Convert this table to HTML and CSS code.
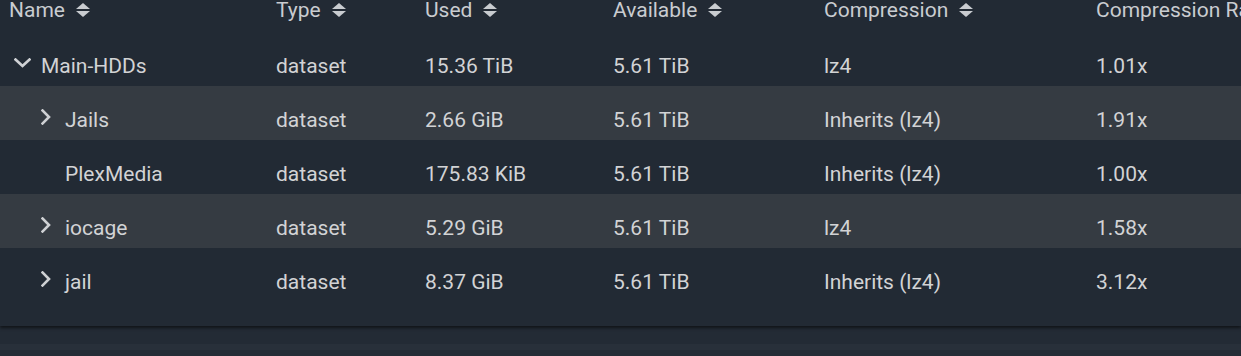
FILE: index.html
```html
<!DOCTYPE html>
<html>
<head>
<meta charset="utf-8">
<link rel="stylesheet" href="styles.css">
</head>
<body>
<div class="page">
  <div class="card">
    <div class="grid head">
      <div class="hc name-h">Name <svg class="sort" viewBox="0 0 14 14"><polygon points="0,6 7,0 14,6"/><polygon points="0,8 7,14 14,8"/></svg></div>
      <div class="hc">Type <svg class="sort" viewBox="0 0 14 14"><polygon points="0,6 7,0 14,6"/><polygon points="0,8 7,14 14,8"/></svg></div>
      <div class="hc">Used <svg class="sort" viewBox="0 0 14 14"><polygon points="0,6 7,0 14,6"/><polygon points="0,8 7,14 14,8"/></svg></div>
      <div class="hc">Available <svg class="sort" viewBox="0 0 14 14"><polygon points="0,6 7,0 14,6"/><polygon points="0,8 7,14 14,8"/></svg></div>
      <div class="hc">Compression <svg class="sort" viewBox="0 0 14 14"><polygon points="0,6 7,0 14,6"/><polygon points="0,8 7,14 14,8"/></svg></div>
      <div class="hc">Compression Ratio</div>
    </div>

    <div class="grid row">
      <div class="c name lvl0"><span class="tog"><svg class="chev-down" viewBox="0 0 17 10"><polyline points="1.5,1.5 8.5,8 15.5,1.5"/></svg></span>Main-HDDs</div>
      <div class="c">dataset</div>
      <div class="c">15.36 TiB</div>
      <div class="c">5.61 TiB</div>
      <div class="c">lz4</div>
      <div class="c">1.01x</div>
    </div>
    <div class="grid row alt">
      <div class="c name lvl1"><span class="tog"><svg class="chev-right" viewBox="0 0 10 16"><polyline points="1.5,1.5 8,8 1.5,14.5"/></svg></span>Jails</div>
      <div class="c">dataset</div>
      <div class="c">2.66 GiB</div>
      <div class="c">5.61 TiB</div>
      <div class="c">Inherits (lz4)</div>
      <div class="c">1.91x</div>
    </div>
    <div class="grid row">
      <div class="c name lvl1"><span class="tog"></span>PlexMedia</div>
      <div class="c">dataset</div>
      <div class="c">175.83 KiB</div>
      <div class="c">5.61 TiB</div>
      <div class="c">Inherits (lz4)</div>
      <div class="c">1.00x</div>
    </div>
    <div class="grid row alt">
      <div class="c name lvl1"><span class="tog"><svg class="chev-right" viewBox="0 0 10 16"><polyline points="1.5,1.5 8,8 1.5,14.5"/></svg></span>iocage</div>
      <div class="c">dataset</div>
      <div class="c">5.29 GiB</div>
      <div class="c">5.61 TiB</div>
      <div class="c">lz4</div>
      <div class="c">1.58x</div>
    </div>
    <div class="grid row">
      <div class="c name lvl1"><span class="tog"><svg class="chev-right" viewBox="0 0 10 16"><polyline points="1.5,1.5 8,8 1.5,14.5"/></svg></span>jail</div>
      <div class="c">dataset</div>
      <div class="c">8.37 GiB</div>
      <div class="c">5.61 TiB</div>
      <div class="c">Inherits (lz4)</div>
      <div class="c">3.12x</div>
    </div>
  </div>
  <div class="footer-strip"></div>
</div>
</body>
</html>
```

FILE: styles.css
```css
html, body {
  margin: 0;
  padding: 0;
  background: #232b35;
  overflow: hidden;
}

.page {
  width: 1241px;
  height: 356px;
  overflow: hidden;
  font-family: Roboto, "Liberation Sans", sans-serif;
  font-size: 21px;
  color: #d2d3d5;
}

.card {
  background: #222a34;
  padding-bottom: 24px;
  box-shadow: 0 2px 3px rgba(0, 0, 0, 0.55);
  position: relative;
  z-index: 1;
}

.grid {
  display: grid;
  grid-template-columns: 276px 149px 188px 211px 272px 400px;
  white-space: nowrap;
}

.head .hc {
  height: 21px;
  line-height: 21px;
  padding-bottom: 11px;
  color: #c9ccd0;
  display: flex;
  align-items: center;
}

.head .name-h {
  padding-left: 9px;
}

.sort {
  width: 14px;
  height: 14px;
  margin-left: 11px;
  margin-top: -1px;
  fill: #c9ccd0;
}

.row {
  height: 54px;
}

.row.alt {
  background: #353b42;
}

.c {
  padding-top: 14px;
  line-height: 40px;
  height: 40px;
}

.name {
  display: flex;
}

.lvl0 {
  padding-left: 10px;
}

.lvl1 {
  padding-left: 34px;
}

.tog {
  width: 24px;
  height: 36px;
  padding-bottom: 4px;
  margin-top: -1px;
  margin-right: 7px;
  display: flex;
  align-items: center;
  justify-content: center;
  flex: none;
}

.tog svg {
  fill: none;
  stroke: #cfd1d4;
  stroke-width: 2.6;
  stroke-linecap: square;
  stroke-linejoin: miter;
}

.chev-down {
  width: 17px;
  height: 10px;
}

.chev-right {
  width: 10px;
  height: 16px;
}

.footer-strip {
  height: 6px;
  margin-top: 18px;
  background: #28303a;
}
```
